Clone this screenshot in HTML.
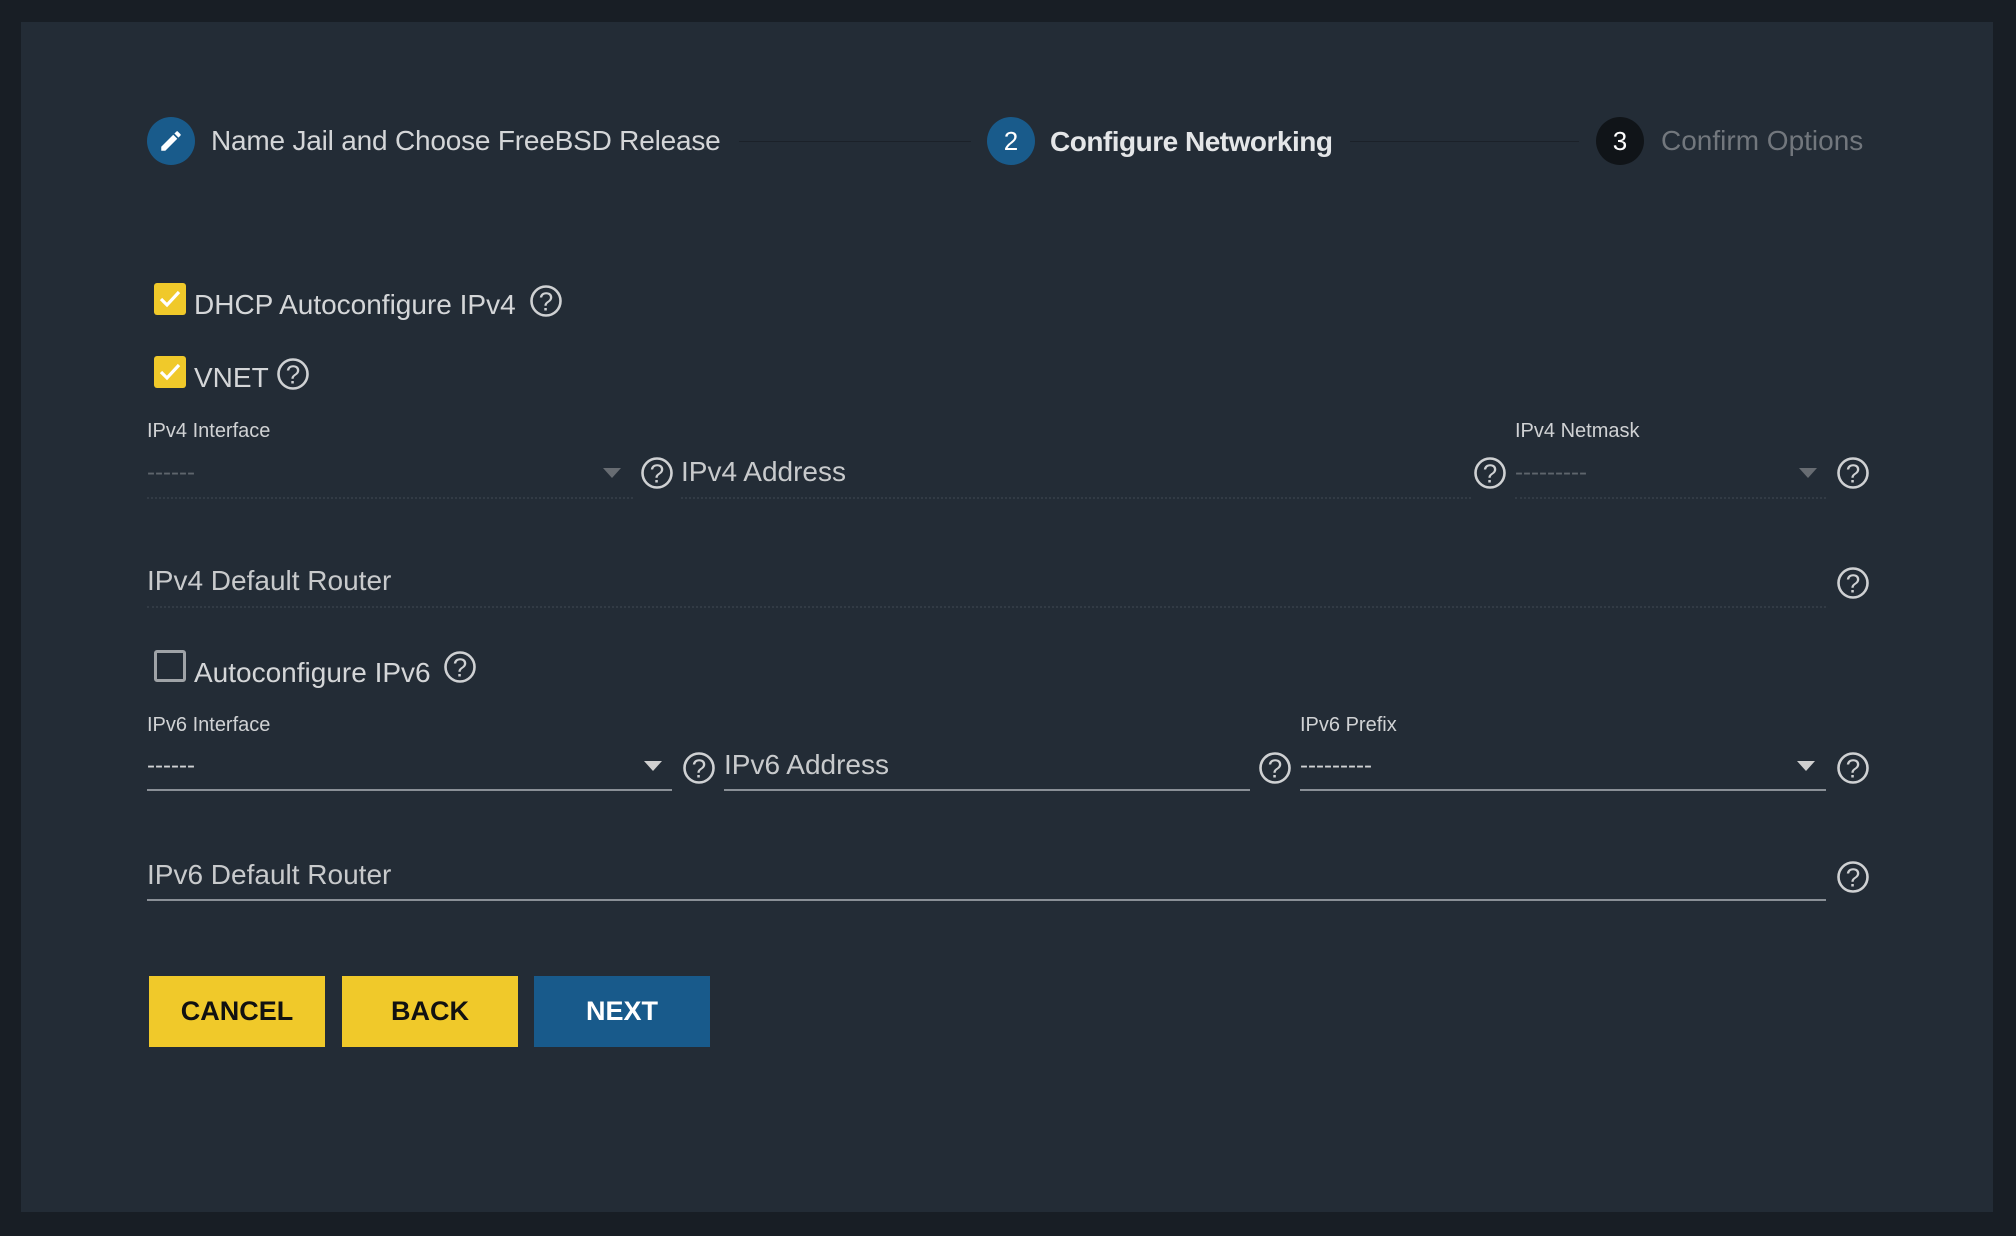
<!DOCTYPE html>
<html><head><meta charset="utf-8"><style>
*{margin:0;padding:0;box-sizing:border-box}
body{width:2016px;height:1236px;background:#181e25;font-family:"Liberation Sans",sans-serif;position:relative;overflow:hidden;color:#d4d6d8}
.card{position:absolute;left:21px;top:22px;width:1972px;height:1190px;background:#232c36}
.a{position:absolute;white-space:nowrap}
.circ{position:absolute;width:48px;height:48px;border-radius:50%;display:flex;align-items:center;justify-content:center;font-size:26px;color:#fff}
.line{position:absolute;height:1px;background:#1b2129}
.t28{font-size:28px;line-height:1}
.lbl{font-size:20px;line-height:1;color:#d0d2d4}
.help{position:absolute;width:34px;height:34px}
.cb{position:absolute;width:32px;height:32px;border-radius:3px;background:#f0c92a}
.dot{position:absolute;height:0;border-top:2px dotted #323b45}
.sol{position:absolute;height:2px;background:#8a9097}
.arr{position:absolute;width:0;height:0;border-left:9px solid transparent;border-right:9px solid transparent;border-top:10px solid #d0d0d0}
.btn{position:absolute;top:976px;height:71px;width:176px;display:flex;align-items:center;justify-content:center;font-weight:bold;font-size:27px}
</style></head><body>
<div class="card"></div>
<svg width="0" height="0" style="position:absolute"><defs><symbol id="q" viewBox="0 0 34 34"><circle cx="17" cy="17" r="14.5" fill="none" stroke="#cfd1d3" stroke-width="2.6"/><text x="17" y="26.5" text-anchor="middle" font-family="Liberation Sans" font-size="26" fill="#cfd1d3">?</text></symbol></defs></svg>

<div class="circ" style="left:147px;top:117px;background:#195b8b"><svg width="26" height="26" viewBox="0 0 24 24"><path d="M3 17.25V21h3.75L17.81 9.94l-3.75-3.75L3 17.25zM20.71 7.04a1 1 0 000-1.41l-2.34-2.34a1 1 0 00-1.41 0l-1.83 1.83 3.75 3.75 1.83-1.83z" fill="#fff"/></svg></div>
<div class="a t28" style="left:211px;top:127px;color:#d4d6d8;letter-spacing:-0.2px">Name Jail and Choose FreeBSD Release</div>
<div class="line" style="left:739px;width:232px;top:141px"></div>
<div class="circ" style="left:987px;top:117px;background:#195b8b">2</div>
<div class="a t28" style="left:1050px;top:128px;color:#e4e6e8;font-weight:bold;letter-spacing:-0.5px">Configure Networking</div>
<div class="line" style="left:1350px;width:229px;top:141px"></div>
<div class="circ" style="left:1596px;top:117px;background:#101418">3</div>
<div class="a t28" style="left:1661px;top:127px;color:#72777d">Confirm Options</div>

<div class="cb" style="left:154px;top:283px"><svg width="32" height="32" viewBox="0 0 32 32"><path d="M7 16l6 6 12-13" fill="none" stroke="#fff" stroke-width="3.2"/></svg></div>
<div class="a t28" style="left:194px;top:291px">DHCP Autoconfigure IPv4</div>
<svg class="help" style="left:529px;top:284px"><use href="#q"/></svg>
<div class="cb" style="left:154px;top:356px"><svg width="32" height="32" viewBox="0 0 32 32"><path d="M7 16l6 6 12-13" fill="none" stroke="#fff" stroke-width="3.2"/></svg></div>
<div class="a t28" style="left:194px;top:364px">VNET</div>
<svg class="help" style="left:276px;top:357px"><use href="#q"/></svg>

<div class="a lbl" style="left:147px;top:421px">IPv4 Interface</div>
<div class="a" style="left:147px;top:459px;font-size:24px;color:#5e656c">------</div>
<div class="arr" style="left:603px;top:468px;border-top-color:#676c72"></div>
<div class="dot" style="left:147px;width:486px;top:497px"></div>
<svg class="help" style="left:640px;top:456px"><use href="#q"/></svg>
<div class="a t28" style="left:681px;top:458px;color:#c8cacc">IPv4 Address</div>
<div class="dot" style="left:681px;width:790px;top:497px"></div>
<svg class="help" style="left:1473px;top:456px"><use href="#q"/></svg>
<div class="a lbl" style="left:1515px;top:421px">IPv4 Netmask</div>
<div class="a" style="left:1515px;top:459px;font-size:24px;color:#5e656c">---------</div>
<div class="arr" style="left:1799px;top:468px;border-top-color:#676c72"></div>
<div class="dot" style="left:1515px;width:311px;top:497px"></div>
<svg class="help" style="left:1836px;top:456px"><use href="#q"/></svg>

<div class="a t28" style="left:147px;top:567px;color:#c8cacc">IPv4 Default Router</div>
<div class="dot" style="left:147px;width:1679px;top:606px"></div>
<svg class="help" style="left:1836px;top:566px"><use href="#q"/></svg>

<div class="a" style="left:154px;top:650px;width:32px;height:32px;border:3px solid #9fa3a7;border-radius:3px"></div>
<div class="a t28" style="left:194px;top:659px">Autoconfigure IPv6</div>
<svg class="help" style="left:443px;top:650px"><use href="#q"/></svg>

<div class="a lbl" style="left:147px;top:715px">IPv6 Interface</div>
<div class="a" style="left:147px;top:752px;font-size:24px;color:#d0d2d4">------</div>
<div class="arr" style="left:644px;top:761px"></div>
<div class="sol" style="left:147px;width:525px;top:789px"></div>
<svg class="help" style="left:682px;top:751px"><use href="#q"/></svg>
<div class="a t28" style="left:724px;top:751px;color:#c8cacc">IPv6 Address</div>
<div class="sol" style="left:724px;width:526px;top:789px"></div>
<svg class="help" style="left:1258px;top:751px"><use href="#q"/></svg>
<div class="a lbl" style="left:1300px;top:715px">IPv6 Prefix</div>
<div class="a" style="left:1300px;top:752px;font-size:24px;color:#d0d2d4">---------</div>
<div class="arr" style="left:1797px;top:761px"></div>
<div class="sol" style="left:1300px;width:526px;top:789px"></div>
<svg class="help" style="left:1836px;top:751px"><use href="#q"/></svg>

<div class="a t28" style="left:147px;top:861px;color:#c8cacc">IPv6 Default Router</div>
<div class="sol" style="left:147px;width:1679px;top:899px"></div>
<svg class="help" style="left:1836px;top:860px"><use href="#q"/></svg>

<div class="btn" style="left:149px;background:#f0c92a;color:#111">CANCEL</div>
<div class="btn" style="left:342px;background:#f0c92a;color:#111">BACK</div>
<div class="btn" style="left:534px;background:#185a8b;color:#fff">NEXT</div>
</body></html>
